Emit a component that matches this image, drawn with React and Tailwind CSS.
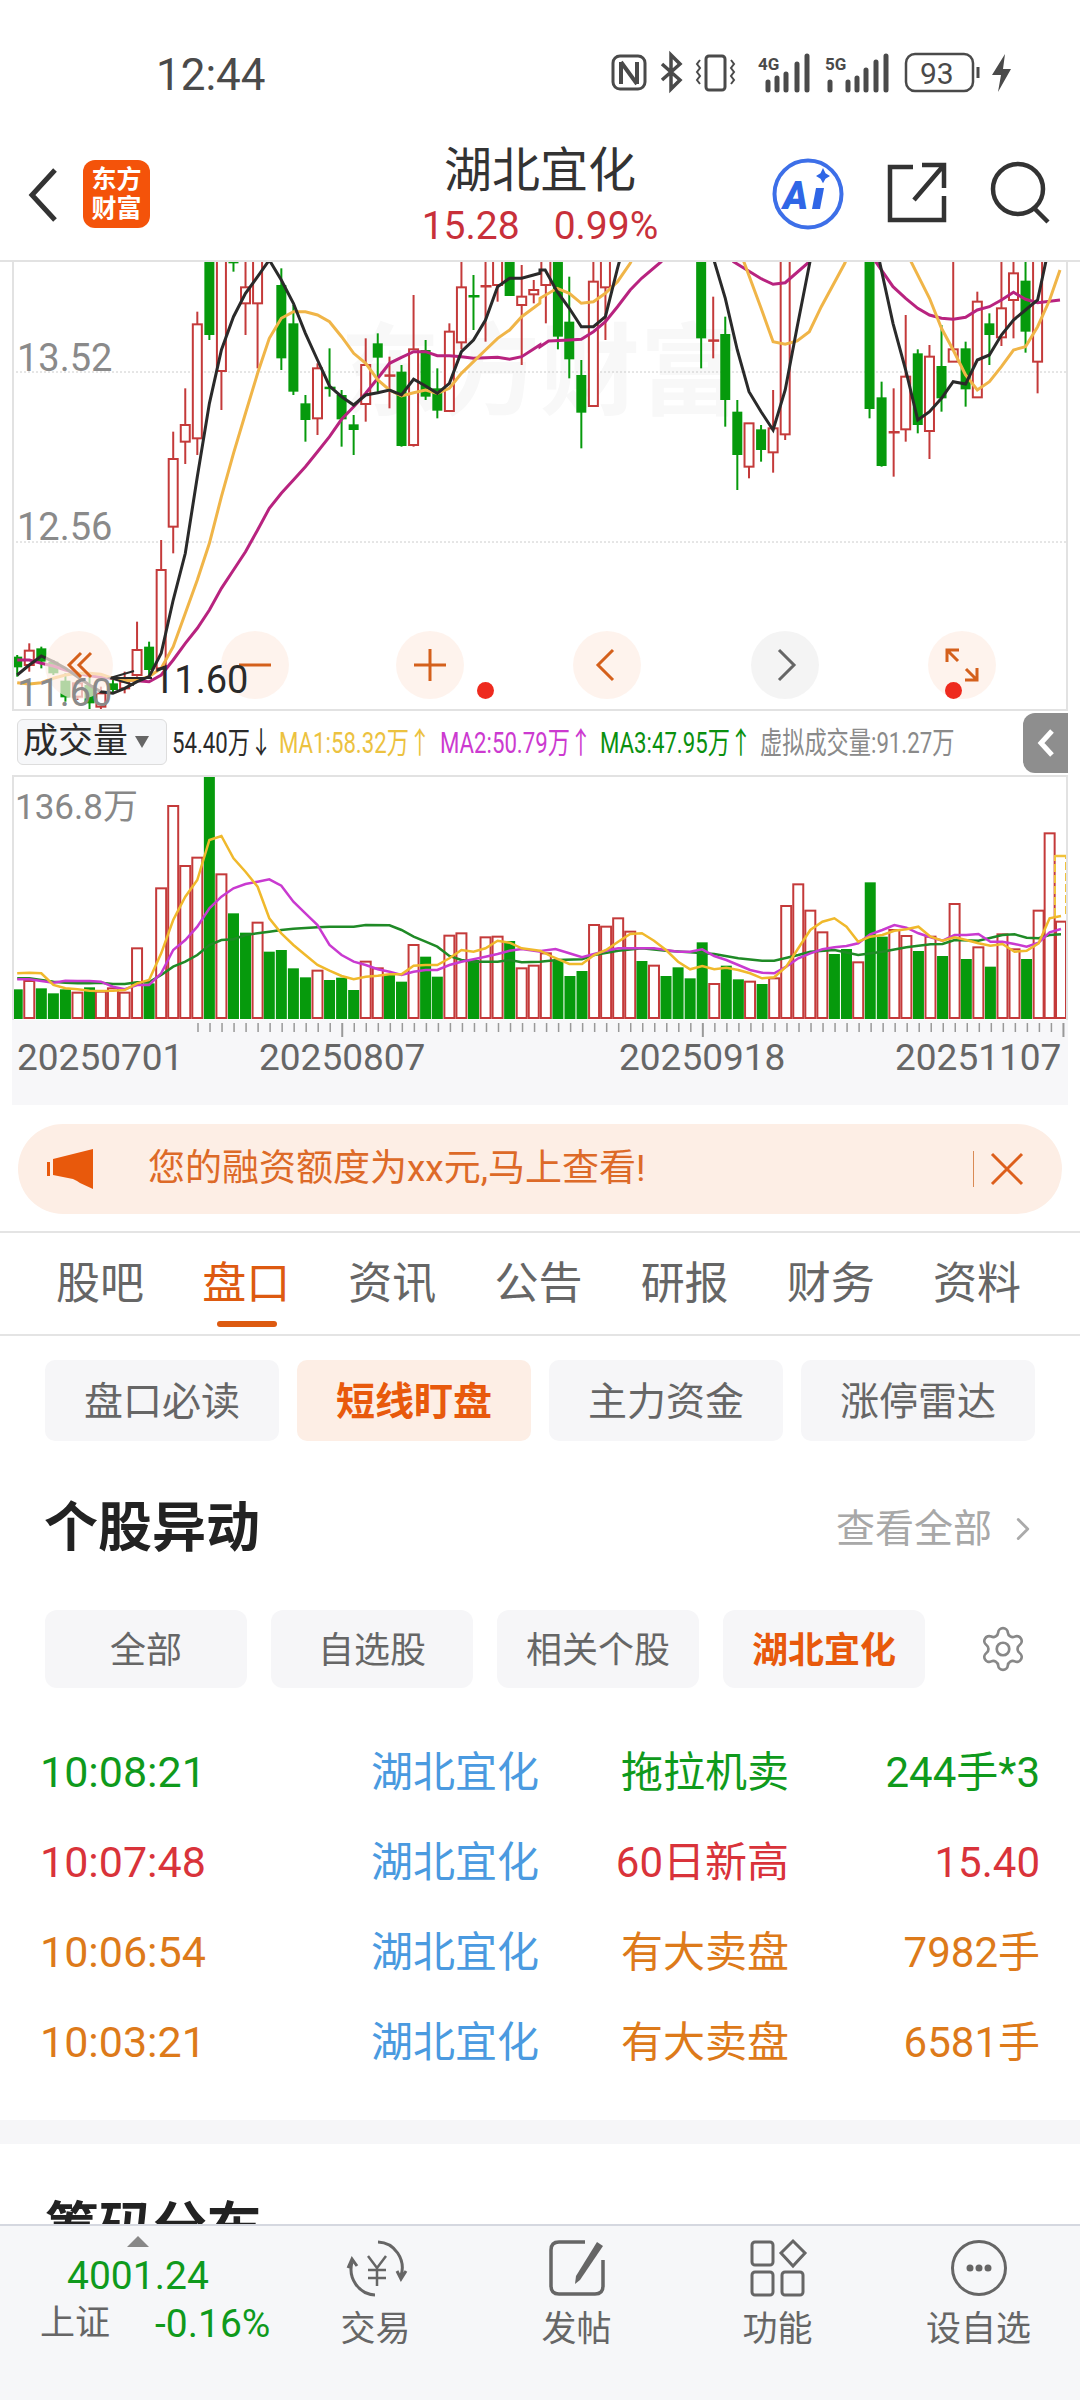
import { ChevronRight, Settings } from "lucide-react";

// candle rows: [zoom x, up?, wick top, body top, body bottom, wick bottom], read from the chart
const candlesLeft = [
  [50,0,1185,1190,1222,1250],[85,1,1150,1172,1215,1235],[120,0,1160,1165,1205,1225],[155,0,1200,1205,1240,1245],
  [190,0,1240,1262,1312,1325],[225,1,1260,1270,1310,1320],[260,0,1250,1275,1330,1350],[293,1,1280,1300,1340,1350],
  [328,0,1260,1270,1290,1300],[362,1,1235,1265,1285,1300],[398,1,1085,1170,1245,1250],[433,0,1145,1160,1230,1245],
  [468,1,840,930,1225,1230],[503,1,515,597,800,880],[538,1,385,495,545,612],[573,1,155,193,535,585],
  [608,0,-60,-60,225,240],[643,1,-60,-60,333,450],[678,0,-60,-60,10,35],[713,1,-60,82,130,225],
  [748,1,-60,-60,130,325],[817,0,25,75,295,330],[852,0,135,190,395,405],[887,0,405,430,480,545],
  [922,1,310,325,475,525],[957,0,265,380,385,410],[992,0,390,405,478,560],[1027,0,465,493,510,585],
  [1062,1,235,315,432,485],[1097,0,220,250,293,400],[1131,1,290,343,348,445],[1166,0,315,335,558,560],
  [1201,1,105,268,555,560],[1236,0,240,270,410,420],[1270,0,325,385,452,475],[1305,1,190,215,453,455],
  [1340,1,-60,82,247,268],[1375,0,45,105,110,210],[1410,1,-60,75,80,245],[1445,1,-60,-60,75,125],
  [1480,0,-60,-60,108,108],[1515,1,15,110,135,315],[1550,1,60,90,103,130],
];
const candlesRight = [
  [17,1,-60,-60,75,190],[52,0,-60,-60,230,268],[85,0,50,185,298,355],[120,0,300,345,458,565],
  [155,1,-60,65,438,438],[190,1,-60,-60,82,240],[468,0,-60,-60,235,325],[503,1,110,238,243,295],
  [538,0,170,222,420,500],[573,0,420,455,585,690],[607,1,490,490,620,655],[642,0,495,508,570,605],
  [677,1,390,505,577,638],[712,1,-60,-60,523,540],[957,0,-60,-60,447,475],[992,0,365,412,618,620],
  [1027,1,385,513,517,650],[1062,1,165,350,508,545],[1097,0,268,280,495,520],[1131,1,255,290,513,597],
  [1166,0,195,318,415,455],[1200,1,-60,268,305,305],[1236,0,245,265,388,440],[1270,1,95,125,412,412],
  [1305,0,160,190,225,315],[1340,1,-60,145,232,258],[1375,1,-60,40,120,235],[1410,0,-60,62,215,278],
  [1445,1,-60,-60,305,400],
];

const blackL = "50,1245 85,1215 120,1188 155,1205 190,1225 225,1250 260,1275 293,1295 328,1300 362,1285 398,1265 433,1250 468,1180 503,1020 538,880 573,650 608,430 643,270 678,170 713,100 748,50 782,0 817,60 852,130 887,220 922,300 957,378 992,410 1027,435 1062,405 1097,398 1131,390 1166,405 1201,358 1236,378 1270,400 1305,370 1340,275 1375,240 1410,180 1445,80 1480,55 1515,55 1568,40";
const blackR = "0,30 15,30 50,95 85,145 120,200 155,200 190,170 225,25 240,-30 490,-30 505,0 538,115 573,270 607,395 642,455 677,510 712,390 747,200 785,0 800,-30 970,-30 985,0 1025,190 1062,330 1097,480 1131,455 1166,415 1200,365 1236,372 1270,300 1305,285 1340,225 1375,180 1410,150 1445,120 1470,0";
const yellowL = "50,1268 85,1272 120,1268 155,1255 190,1245 225,1240 260,1240 293,1243 328,1255 362,1262 398,1260 433,1250 468,1225 503,1160 538,1060 573,960 608,850 643,710 678,580 713,460 748,340 782,235 817,175 852,155 887,155 922,165 957,185 992,230 1027,280 1062,310 1097,360 1131,390 1166,408 1201,398 1236,390 1270,400 1305,385 1340,340 1375,305 1410,270 1445,235 1480,210 1515,170 1568,130";
const yellowR = "0,115 50,85 85,100 120,130 155,125 190,100 225,65 262,10 280,-30 575,-30 590,0 642,145 677,245 712,253 747,243 782,215 817,140 885,10 900,-30 1060,-30 1075,0 1131,115 1166,205 1200,270 1236,345 1270,390 1305,365 1340,320 1375,270 1410,260 1445,200 1480,120 1510,30";
const magentaL = "50,1200 85,1200 120,1210 155,1218 190,1230 225,1240 260,1247 293,1252 328,1255 362,1258 398,1262 433,1265 468,1245 503,1200 538,1150 573,1105 608,1050 643,985 678,930 713,875 748,810 782,745 817,700 852,660 887,620 922,575 957,530 992,478 1027,440 1062,400 1097,355 1131,310 1166,292 1201,275 1236,275 1270,287 1305,287 1340,290 1375,295 1410,293 1445,292 1480,298 1515,290 1568,255";
const magentaR = "0,260 25,243 85,240 120,238 155,215 190,185 225,140 262,90 295,55 352,5 370,-30 545,-30 562,5 640,55 677,73 712,68 782,5 800,-30 960,-30 975,5 1025,80 1062,115 1097,145 1131,165 1166,175 1200,178 1236,172 1270,150 1305,140 1340,120 1375,97 1410,118 1445,128 1510,120";

// volume bars: [zoom x, up?, top]
const volLeft = [
  [50,0,868],[85,1,843],[120,0,865],[155,0,880],[190,0,868],[225,1,878],[260,0,862],[293,1,875],[328,1,865],[362,1,878],
  [398,1,745],[433,0,850],[468,1,565],[503,1,318],[538,1,498],[573,1,473],[608,0,225],[643,1,523],[678,0,640],[713,0,698],
  [748,1,668],[782,0,755],[817,0,750],[852,0,805],[887,0,832],[922,1,812],[957,0,840],[992,0,833],[1027,0,870],[1062,1,785],
  [1097,1,805],[1131,0,825],[1166,0,845],[1201,1,735],[1236,0,770],[1270,0,830],[1305,1,707],[1340,1,700],[1375,0,780],
  [1410,1,712],[1445,1,710],[1480,0,723],[1515,1,805],[1550,1,797],
];
const volRight = [
  [17,1,760],[52,0,780],[87,0,828],[122,0,813],[157,1,675],[192,1,680],[227,1,655],[262,1,695],[296,0,783],[331,1,797],
  [366,0,828],[401,0,802],[436,0,835],[471,0,727],[506,1,852],[541,0,797],[576,0,838],[610,1,845],[645,0,852],[680,1,835],
  [715,1,618],[750,1,553],[785,1,632],[820,1,697],[855,0,762],[890,0,747],[924,1,787],[959,0,547],[994,0,710],[1029,1,690],
  [1064,1,708],[1099,0,753],[1134,1,710],[1169,0,768],[1204,1,612],[1238,0,777],[1273,1,742],[1308,0,800],[1343,1,703],
  [1378,1,748],[1413,0,777],[1448,1,632],[1480,1,400],[1513,1,665],
];
const vYellowL = "50,820 85,818 120,820 155,855 190,865 225,868 260,872 293,873 328,872 362,870 398,850 433,840 468,760 503,660 538,590 573,540 608,420 643,408 678,475 713,515 748,560 782,655 817,700 852,735 887,765 922,795 957,812 992,828 1027,838 1062,830 1097,827 1131,823 1166,823 1201,797 1236,795 1270,795 1305,775 1340,750 1375,755 1410,745 1445,722 1480,728 1515,745 1568,752";
const vYellowR = "0,752 35,770 85,792 122,792 157,765 192,750 227,725 262,702 296,700 331,722 366,750 401,785 436,808 471,798 506,808 541,803 576,810 610,820 645,835 680,832 715,800 750,745 785,690 820,665 855,655 890,680 924,725 959,710 994,705 1029,692 1064,688 1099,680 1134,710 1169,722 1204,712 1238,720 1273,730 1308,737 1343,732 1378,755 1413,752 1448,730 1480,655 1513,648";
const vMagentaL = "50,838 85,838 120,843 155,848 190,842 225,843 260,843 293,845 328,860 362,868 398,855 433,855 468,820 503,750 538,720 573,680 608,625 643,590 678,565 713,552 748,545 782,538 817,557 852,605 887,640 922,675 957,735 992,765 1027,785 1062,795 1097,808 1131,815 1166,825 1201,815 1236,810 1270,810 1305,795 1340,785 1375,778 1410,770 1445,762 1480,752 1515,747 1568,755";
const vMagentaR = "0,753 45,747 85,760 122,772 157,762 192,752 227,745 262,745 331,745 401,755 436,755 471,748 506,768 541,780 576,795 610,810 645,818 680,820 715,800 750,775 785,760 820,748 855,742 890,738 924,730 959,703 994,690 1029,675 1064,683 1099,700 1134,712 1169,722 1204,705 1238,705 1273,702 1308,725 1343,725 1378,732 1413,740 1448,728 1480,697 1513,687";
const vGreenL = "50,835 85,835 120,840 155,845 190,848 225,850 260,850 293,848 328,852 362,852 398,847 433,846 468,825 503,800 538,785 573,765 608,735 643,720 678,718 713,705 748,700 782,695 817,690 852,686 887,684 922,682 957,680 1027,680 1062,675 1131,676 1166,690 1201,710 1236,725 1270,740 1305,768 1340,780 1375,785 1445,785 1480,780 1515,787 1568,785";
const vGreenR = "0,785 50,780 122,778 157,765 227,752 296,745 366,752 436,757 506,762 576,775 645,782 680,782 750,765 785,755 855,750 924,765 994,755 1064,742 1134,733 1169,732 1204,720 1273,722 1343,705 1378,703 1413,713 1448,715 1480,705 1513,703";

const RED = "#c43a3a";
const GREEN = "#069a0c";

const sx = (z, right) => (right ? 528 : -12) + z / 2.904;
const kY = (z) => z / 3 - 1;
const vY = (z) => z / 3 - 75;

const toPts = (left, right, yf) => {
  const a = left.split(" ").map((p) => {
    const [x, y] = p.split(",").map(Number);
    return `${sx(x, false).toFixed(1)},${yf(y).toFixed(1)}`;
  });
  const b = right.split(" ").map((p) => {
    const [x, y] = p.split(",").map(Number);
    return `${sx(x, true).toFixed(1)},${yf(y).toFixed(1)}`;
  });
  return [...a, ...b].join(" ");
};

const Candle = ({ c, right }) => {
  const [zx, up, wt, bt, bb, wb] = c;
  const x = sx(zx, right);
  const color = up ? RED : GREEN;
  const doji = bb - bt < 10;
  return (
    <g>
      <line x1={x} x2={x} y1={kY(wt)} y2={kY(wb)} stroke={color} strokeWidth="2" />
      {up && !doji ? (
        <rect x={x - 4.5} y={kY(bt)} width="9" height={(bb - bt) / 3} fill="#fff" stroke={color} strokeWidth="2" />
      ) : (
        <rect x={x - 5} y={kY(bt)} width={doji ? 11 : 10} height={Math.max((bb - bt) / 3, 2.5)} fill={color} />
      )}
    </g>
  );
};

const VolBar = ({ b, right }) => {
  const [zx, up, top] = b;
  const x = sx(zx, right);
  const h = (957 - top) / 3;
  return up ? (
    <rect x={x - 5} y={vY(top)} width="10" height={h - 1} fill="#fff" stroke={RED} strokeWidth="2" />
  ) : (
    <rect x={x - 5.5} y={vY(top)} width="11" height={h} fill={GREEN} />
  );
};

const ChartButton = ({ left, gray, children }) => (
  <div
    className={`absolute top-[369px] w-[68px] h-[68px] rounded-full flex items-center justify-center ${gray ? "bg-[#f1f1f1]/80" : "bg-[#fdeee5]/70"}`}
    style={{ left }}
  >
    <svg width="36" height="36" viewBox="0 0 36 36" fill="none" stroke={gray ? "#666" : "#d4601c"} strokeWidth="3">
      {children}
    </svg>
  </div>
);

const KChart = () => (
  <div className="relative ml-[12px] w-[1056px] h-[450px] border-x-2 border-b-2 border-[#e2e2e2] overflow-hidden bg-white">
    <div className="absolute left-[326px] top-[56px] flex text-[100px] leading-[110px] font-bold text-[#f8f8f8] whitespace-nowrap">
      东方财富
    </div>
    <svg className="absolute left-[-2px] top-[-1px]" width="1056" height="451">
      <line x1="0" x2="1056" y1="111" y2="111" stroke="#ccc" strokeDasharray="2 2" />
      <line x1="0" x2="1056" y1="281" y2="281" stroke="#ccc" strokeDasharray="2 2" />
      {candlesLeft.map((c) => <Candle key={"l" + c[0]} c={c} />)}
      {candlesRight.map((c) => <Candle key={"r" + c[0]} c={c} right />)}
      <polyline points={toPts(magentaL, magentaR, kY)} fill="none" stroke="#b8237f" strokeWidth="3" />
      <polyline points={toPts(yellowL, yellowR, kY)} fill="none" stroke="#f0b548" strokeWidth="3" />
      <polyline points={toPts(blackL, blackR, kY)} fill="none" stroke="#2a2a2a" strokeWidth="3" />
      <path d="M122 424 L98 417 L122 410 M98 417 H140" fill="none" stroke="#2a2a2a" strokeWidth="2" />
    </svg>
    <span className="absolute left-[3px] top-[74px] text-[38px] leading-[44px] text-[#8a8a8a]">13.52</span>
    <span className="absolute left-[3px] top-[243px] text-[38px] leading-[44px] text-[#8a8a8a]">12.56</span>
    <ChartButton left="31px">
      <path d="M20 6 L8 18 L20 30 M30 6 L18 18 L30 30" />
    </ChartButton>
    <ChartButton left="207px">
      <path d="M2 18 H34" />
    </ChartButton>
    <ChartButton left="382px">
      <path d="M2 18 H34 M18 2 V34" />
    </ChartButton>
    <ChartButton left="559px">
      <path d="M24 3 L9 18 L24 33" />
    </ChartButton>
    <ChartButton left="737px" gray>
      <path d="M12 3 L27 18 L12 33" />
    </ChartButton>
    <ChartButton left="914px">
      <path d="M3 15 V3 H15 M3 3 L14 14 M33 21 V33 H21 M33 33 L22 22" />
    </ChartButton>
    <span className="absolute left-[3px] top-[409px] text-[38px] leading-[44px] text-[#8a8a8a]">11.60</span>
    <span className="absolute left-[139px] top-[396px] text-[38px] leading-[44px] text-[#2a2a2a]">11.60</span>
    <span className="absolute left-[463px] top-[420px] w-[17px] h-[17px] rounded-full bg-[#ee2a1e]" />
    <span className="absolute left-[931px] top-[420px] w-[17px] h-[17px] rounded-full bg-[#ee2a1e]" />
  </div>
);

const Legend = ({ w, color, children }) => (
  <span className={`block shrink-0 ${w} ${color}`}>
    <span className="inline-block origin-left scale-x-[0.74] whitespace-nowrap text-[30px] leading-[40px]">{children}</span>
  </span>
);

const LegendRow = () => (
  <div className="relative h-[64px] flex items-center pl-[17px]">
    <div className="w-[150px] h-[46px] shrink-0 mt-[-2px] rounded-[6px] border border-[#ddd] bg-[#f6f7f9] flex items-center pl-[5px] text-[35px] leading-[40px] text-[#2a2a2a]">
      成交量
      <span className="ml-[7px] w-0 h-0 border-x-[7px] border-x-transparent border-t-[12px] border-t-[#666]" />
    </div>
    <span className="w-[5px]" />
    <Legend w="w-[107px]" color="text-[#2a2a2a]">54.40万↓</Legend>
    <Legend w="w-[161px]" color="text-[#ecc23f]">MA1:58.32万↑</Legend>
    <Legend w="w-[160px]" color="text-[#cc3ad0]">MA2:50.79万↑</Legend>
    <Legend w="w-[160px]" color="text-[#0a900f]">MA3:47.95万↑</Legend>
    <Legend w="w-[200px]" color="text-[#8a8a8a]">虚拟成交量:91.27万</Legend>
    <div className="absolute left-[1023px] top-[2px] w-[45px] h-[60px] rounded-l-[12px] bg-[#8e8e8e] flex items-center justify-center">
      <svg width="20" height="30" viewBox="0 0 20 30" fill="none" stroke="#fff" strokeWidth="5">
        <path d="M16 3 L5 15 L16 27" />
      </svg>
    </div>
  </div>
);

const VolumeChart = () => (
  <div className="relative ml-[12px] w-[1056px] h-[245px] border-x-2 border-t-2 border-[#e2e2e2] overflow-hidden bg-white">
    <svg className="absolute left-[-2px] top-[-2px]" width="1056" height="245">
      {volLeft.map((b) => <VolBar key={"l" + b[0]} b={b} />)}
      {volRight.map((b) => <VolBar key={"r" + b[0]} b={b} right />)}
      <path d="M1043 141 V81 H1054 V141" fill="none" stroke="#f0c23c" strokeWidth="2" strokeDasharray="8 3" />
      <path d="M1043 81 H1054" stroke="#f0c23c" strokeWidth="2.5" />
      <polyline points={toPts(vGreenL, vGreenR, vY)} fill="none" stroke="#1f8a26" strokeWidth="2.5" />
      <polyline points={toPts(vMagentaL, vMagentaR, vY)} fill="none" stroke="#c93ad0" strokeWidth="2.5" />
      <polyline points={toPts(vYellowL, vYellowR, vY)} fill="none" stroke="#f0b92c" strokeWidth="2.5" />
    </svg>
    <span className="absolute left-[1px] top-[10px] text-[35px] leading-[42px] text-[#888]">136.8万</span>
  </div>
);

const ticks = Array.from({ length: 73 }, (_, i) => 198 + i * 12.02);

const DateBand = () => (
  <div className="ml-[12px] w-[1056px] h-[85px] bg-[#f7f7f9]">
    <svg className="block" width="1056" height="20">
      {ticks.map((x) => {
        const major = [342, 702, 1062].some((m) => Math.abs(x - m) < 6);
        return <line key={x} x1={x - 12} x2={x - 12} y1="3" y2={major ? 17 : 12} stroke="#999" strokeWidth={major ? 2 : 1.5} />;
      })}
    </svg>
    <div className="flex pl-[5px] text-[37px] leading-[44px] text-[#666] mt-[-4px]">
      <span className="w-[242px]">20250701</span>
      <span className="w-[360px]">20250807</span>
      <span className="w-[276px]">20250918</span>
      <span>20251107</span>
    </div>
  </div>
);

const Banner = () => (
  <div className="mt-[19px] mx-[18px] h-[90px] rounded-[45px] bg-[#fdeee5] flex items-center pl-[29px] pr-[38px]">
    <svg width="46" height="40" viewBox="0 0 46 40" fill="#e8590c">
      <rect x="0" y="13" width="3" height="14" />
      <path d="M6 10 L46 0 V40 L33 34 L30 32 L26 30 L6 26 Z" />
    </svg>
    <span className="ml-[55px] text-[37px] leading-[44px] text-[#dd6a28] whitespace-nowrap">您的融资额度为xx元,马上查看!</span>
    <span className="ml-auto w-[1px] h-[36px] bg-[#d98a55]" />
    <svg className="ml-[16px]" width="34" height="34" viewBox="0 0 34 34" fill="none" stroke="#dd5f1c" strokeWidth="3">
      <path d="M2 2 L32 32 M32 2 L2 32" />
    </svg>
  </div>
);

const tabs = ["股吧", "盘口", "资讯", "公告", "研报", "财务", "资料"];

const Tabs = () => (
  <div className="mt-[17px] h-[105px] border-y-2 border-[#e4e4e4] flex pl-[27px] pr-[30px]">
    {tabs.map((t, i) => (
      <div key={t} className="relative flex-1 flex items-center justify-center">
        <span className={`text-[44px] leading-[50px] ${i === 1 ? "text-[#dd5a10]" : "text-[#666]"}`}>{t}</span>
        {i === 1 && <span className="absolute left-[44px] bottom-[7px] w-[60px] h-[6px] rounded-full bg-[#dd5a10]" />}
      </div>
    ))}
  </div>
);

const subTabs = ["盘口必读", "短线盯盘", "主力资金", "涨停雷达"];

const SubTabs = () => (
  <div className="mt-[24px] ml-[45px] flex gap-[18px]">
    {subTabs.map((t, i) => (
      <div
        key={t}
        className={`w-[234px] h-[81px] pt-[4px] rounded-[10px] flex items-center justify-center text-[39px] ${i === 1 ? "bg-[#fdeee5] text-[#e8590c] font-bold" : "bg-[#f6f6f8] text-[#666]"}`}
      >
        {t}
      </div>
    ))}
  </div>
);

const SectionHead = () => (
  <div className="mt-[55px] h-[66px] pl-[44px] pr-[44px] flex items-center">
    <span className="text-[54px] leading-[66px] font-bold text-[#222]">个股异动</span>
    <span className="ml-auto text-[39px] text-[#a8a8a8]">查看全部</span>
    <ChevronRight className="ml-[12px] mr-[-6px] text-[#aaa]" size={38} strokeWidth={1.8} />
  </div>
);

const chips = ["全部", "自选股", "相关个股", "湖北宜化"];

const Chips = () => (
  <div className="mt-[48px] ml-[45px] flex items-center gap-[24px]">
    {chips.map((t, i) => (
      <div
        key={t}
        className={`w-[202px] h-[78px] pt-[4px] rounded-[12px] bg-[#f6f6f8] flex items-center justify-center text-[36px] ${i === 3 ? "text-[#e8590c] font-bold" : "text-[#666]"}`}
      >
        {t}
      </div>
    ))}
    <Settings className="ml-[29px] text-[#888]" size={50} strokeWidth={1.3} />
  </div>
);

const rows = [
  ["10:08:21", "拖拉机卖", "244手*3", "text-[#0f9a1c]"],
  ["10:07:48", "60日新高", "15.40", "text-[#d9333a]"],
  ["10:06:54", "有大卖盘", "7982手", "text-[#dd7a1a]"],
  ["10:03:21", "有大卖盘", "6581手", "text-[#dd7a1a]"],
];

const AlertList = () => (
  <div className="mt-[39px] pl-[40px] pr-[40px]">
    {rows.map(([time, action, value, color]) => (
      <div key={time} className={`h-[90px] flex items-center text-[42px] ${color}`}>
        <span className="w-[331px] text-[43px]">{time}</span>
        <span className="w-[200px] text-[#4a9ae0]">湖北宜化</span>
        <span className="w-[218px] text-right">{action}</span>
        <span className="flex-1 text-right">{value}</span>
      </div>
    ))}
  </div>
);

const StatusBar = () => (
  <div className="relative h-[128px] text-[#4a4a4a]">
    <span className="absolute left-[156px] top-[49px] text-[44px] leading-[52px]">12:44</span>
    <svg className="absolute left-[610px] top-[50px]" width="410" height="46" viewBox="0 0 410 46" fill="none" stroke="#4a4a4a">
      {/* nfc */}
      <rect x="3" y="6" width="32" height="33" rx="7" strokeWidth="3" />
      <path d="M11 12 V34 M27 12 V34 M11 12 L27 34" strokeWidth="4" />
      {/* bluetooth */}
      <path d="M52 14 L70 30 L61 39 V5 L70 14 L52 30" strokeWidth="3.5" />
      {/* vibrate */}
      <rect x="96" y="6" width="19" height="34" rx="3" strokeWidth="3" />
      <path d="M90 10 l-3 4 l3 4 l-3 4 l3 4 l-3 4 l3 4 M121 10 l3 4 l-3 4 l3 4 l-3 4 l3 4 l-3 4" strokeWidth="2" />
      {/* 4g bars */}
      <text x="148" y="20" fontSize="17" fontWeight="700" fill="#4a4a4a" stroke="none">4G</text>
      <path d="M158 32 V40 M167 28 V40 M176 24 V40 M187 14 V40 M197 6 V40" strokeWidth="5" strokeLinecap="round" />
      {/* 5g bars */}
      <text x="215" y="20" fontSize="17" fontWeight="700" fill="#4a4a4a" stroke="none">5G</text>
      <path d="M220 32 V40 M238 32 V40 M247 28 V40 M256 20 V40 M266 12 V40 M276 6 V40" strokeWidth="5" strokeLinecap="round" />
      {/* battery */}
      <rect x="296" y="4" width="67" height="37" rx="9" strokeWidth="2.5" />
      <path d="M368 17 V28" strokeWidth="3" />
      <text x="310" y="34" fontSize="30" fill="#4a4a4a" stroke="none">93</text>
      {/* charging bolt */}
      <path d="M395 4 L382 25 H391 L388 42 L401 19 H393 Z" fill="#4a4a4a" stroke="none" />
    </svg>
  </div>
);

const NavBar = () => (
  <div className="relative h-[134px] border-b-2 border-[#e2e2e2] flex items-start">
    <svg className="ml-[26px] mt-[39px]" width="34" height="56" viewBox="0 0 34 56" fill="none" stroke="#333" strokeWidth="5">
      <path d="M29 3 L6 28 L29 53" />
    </svg>
    <div className="ml-[23px] mt-[32px] w-[67px] h-[68px] rounded-[12px] bg-[#f4530a] flex flex-col items-center justify-center text-white text-[25px] leading-[29px] font-bold">
      <span>东方</span>
      <span>财富</span>
    </div>
    <div className="absolute left-0 right-0 top-[15px] flex flex-col items-center">
      <span className="text-[48px] leading-[56px] text-[#333]">湖北宜化</span>
      <span className="mt-[5px] text-[39px] leading-[44px] text-[#c8303a] whitespace-nowrap">
        15.28<span className="ml-[34px]">0.99%</span>
      </span>
    </div>
    <svg className="absolute left-[770px] top-[24px]" width="80" height="80" viewBox="0 0 80 80" fill="none">
      <circle cx="38" cy="42" r="33.5" stroke="#3d6fe8" strokeWidth="4" />
      <text x="13" y="57" fontSize="38" fontWeight="900" fontStyle="italic" fill="#2f66e6" stroke="none">A</text>
      <path d="M46 36 H54 L50 57 H42 Z" fill="#2f66e6" />
      <path d="M53 21 L55.5 27 L60 30 L55.5 33 L53 38 L50.5 33 L46 30 L50.5 27 Z" fill="#2f66e6" transform="translate(0 -3) scale(1 .9)" />
    </svg>
    <svg className="absolute left-[884px] top-[32px]" width="66" height="66" viewBox="0 0 66 66" fill="none" stroke="#333" strokeWidth="4.5">
      <path d="M29 7 H6 V60 H60 V36 M60 28 V5 H38 M60 5 L30 40" />
    </svg>
    <svg className="absolute left-[988px] top-[32px]" width="70" height="66" viewBox="0 0 70 66" fill="none" stroke="#333" strokeWidth="4.5">
      <circle cx="30" cy="29" r="25" />
      <path d="M46 48 L60 62" />
    </svg>
  </div>
);

const BottomItem = ({ label, children }) => (
  <div className="w-[201px] flex flex-col items-center">
    <svg className="mt-[12px]" width="70" height="60" viewBox="0 0 70 60" fill="none" stroke="#666" strokeWidth="3">
      {children}
    </svg>
    <span className="mt-[12px] text-[35px] leading-[40px] text-[#666]">{label}</span>
  </div>
);

const BottomBar = () => (
  <div className="relative z-10 h-[176px] border-t-2 border-[#d5d8e0] bg-[#f6f7f9] flex shrink-0">
    <div className="w-[275px] relative">
      <span className="absolute left-[127px] top-[10px] w-0 h-0 border-x-[11px] border-x-transparent border-b-[11px] border-b-[#888]" />
      <div className="absolute left-[67px] top-[28px] text-[39px] leading-[44px] text-[#0f9a1c]">4001.24</div>
      <div className="absolute left-[40px] top-[76px] text-[35px] leading-[44px] text-[#666]">上证</div>
      <div className="absolute left-[155px] top-[76px] text-[39px] leading-[44px] text-[#0f9a1c]">-0.16%</div>
    </div>
    <BottomItem label="交易">
      <path d="M37 4 A25 26 0 0 1 60 38 M34 57 A25 26 0 0 1 11 24 M7 30 L11 21 L16 28 M56 33 L60 41 L65 33" />
      <path d="M27 18 L36 30 L45 18 M36 30 V48 M27 32 H45 M27 40 H45" strokeWidth="2.5" />
    </BottomItem>
    <BottomItem label="发帖">
      <path d="M43 4 H17 Q9 4 9 12 V48 Q9 56 17 56 H53 Q61 56 61 48 V22" strokeWidth="3.5" />
      <path d="M55 4 L61 8 L38 42 L33 46 L34 38 Z" fill="#666" stroke="none" />
    </BottomItem>
    <BottomItem label="功能">
      <rect x="9" y="4" width="21" height="23" rx="3" />
      <rect x="9" y="34" width="21" height="23" rx="3" />
      <rect x="39" y="34" width="21" height="23" rx="3" />
      <path d="M50 3 L62 15 L50 28 L38 15 Z" />
    </BottomItem>
    <BottomItem label="设自选">
      <circle cx="35" cy="30" r="26.5" />
      <circle cx="26" cy="30" r="2" fill="#666" />
      <circle cx="35" cy="30" r="2" fill="#666" />
      <circle cx="44" cy="30" r="2" fill="#666" />
    </BottomItem>
  </div>
);

export default function App() {
  return (
    <div className="w-[1080px] h-[2400px] flex flex-col overflow-hidden bg-white font-['Roboto','Noto_Sans_CJK_SC',sans-serif]">
      <StatusBar />
      <NavBar />
      <KChart />
      <LegendRow />
      <VolumeChart />
      <DateBand />
      <Banner />
      <Tabs />
      <SubTabs />
      <SectionHead />
      <Chips />
      <AlertList />
      <div className="mt-[33px] h-[24px] bg-[#f6f6f8] shrink-0" />
      <div className="h-[80px] grow-0 shrink-0 overflow-hidden pl-[45px] pt-[52px] text-[54px] leading-[66px] font-bold text-[#222]">
        筹码分布
      </div>
      <div className="flex-1" />
      <BottomBar />
    </div>
  );
}
